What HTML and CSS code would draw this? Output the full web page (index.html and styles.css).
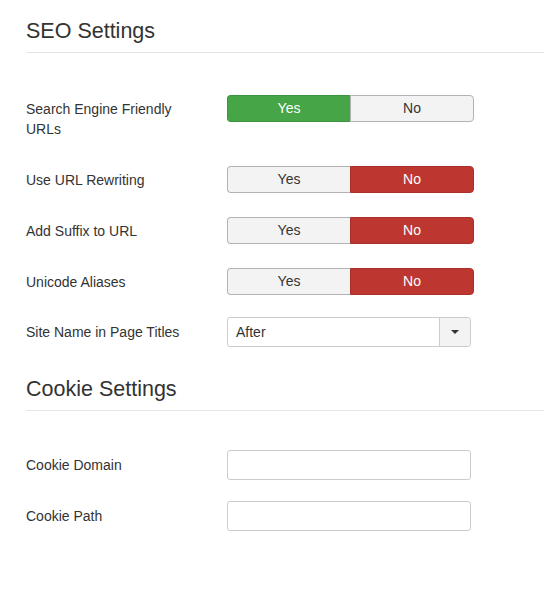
FILE: index.html
```html
<!DOCTYPE html>
<html lang="en">
<head>
    <meta charset="UTF-8">
    <meta name="viewport" content="width=device-width, initial-scale=1.0">
    <title>Global Configuration - Site</title>
    <link rel="stylesheet" href="styles.css">
</head>
<body>
    <div class="settings">

        <!-- SEO -->
        <fieldset class="fieldset">
            <div class="legend">SEO Settings</div>

            <div class="control-group">
                <label class="control-label">Search Engine Friendly URLs</label>
                <div class="controls">
                    <div class="btn-group">
                        <span class="btn active-yes">Yes</span>
                        <span class="btn">No</span>
                    </div>
                </div>
            </div>

            <div class="control-group">
                <label class="control-label">Use URL Rewriting</label>
                <div class="controls">
                    <div class="btn-group">
                        <span class="btn">Yes</span>
                        <span class="btn active-no">No</span>
                    </div>
                </div>
            </div>

            <div class="control-group">
                <label class="control-label">Add Suffix to URL</label>
                <div class="controls">
                    <div class="btn-group">
                        <span class="btn">Yes</span>
                        <span class="btn active-no">No</span>
                    </div>
                </div>
            </div>

            <div class="control-group tight">
                <label class="control-label">Unicode Aliases</label>
                <div class="controls">
                    <div class="btn-group">
                        <span class="btn">Yes</span>
                        <span class="btn active-no">No</span>
                    </div>
                </div>
            </div>

            <div class="control-group field-row">
                <label class="control-label">Site Name in Page Titles</label>
                <div class="controls">
                    <div class="select">
                        <span class="select-value">After</span>
                        <span class="select-arrow"><b class="caret"></b></span>
                    </div>
                </div>
            </div>
        </fieldset>

        <!-- Cookies -->
        <fieldset class="fieldset cookie">
            <div class="legend">Cookie Settings</div>

            <div class="control-group field-row">
                <label class="control-label">Cookie Domain</label>
                <div class="controls">
                    <input class="input" type="text">
                </div>
            </div>

            <div class="control-group field-row">
                <label class="control-label">Cookie Path</label>
                <div class="controls">
                    <input class="input" type="text">
                </div>
            </div>
        </fieldset>

    </div>
</body>
</html>
```

FILE: styles.css
```css
body {
    margin: 0;
    background-color: #ffffff;
    color: #333333;
    font-family: "Liberation Sans", Arial, sans-serif;
    font-size: 14px;
}

.settings {
    padding: 19px 0 0 26px;
}

.fieldset {
    border: none;
    margin: 0;
    padding: 0;
}

/* Section title with the thin rule under it */
.legend {
    font-size: 21.5px;
    line-height: 24px;
    padding-bottom: 9px;
    border-bottom: 1px solid #e5e5e5;
    margin-bottom: 42px;
}

.cookie {
    margin-top: 9px;
}

.cookie .legend {
    margin-bottom: 39px;
}

/* Label + control rows */
.control-group {
    display: flex;
    align-items: flex-start;
    margin-bottom: 24px;
}

.control-group.tight {
    margin-bottom: 22px;
}

.control-group.field-row {
    margin-bottom: 21px;
}

.control-label {
    flex: 0 0 160px;
    margin-right: 41px;
    padding: 4px 0 3px;
    line-height: 20px;
}

.field-row .control-label {
    padding-top: 5px;
}

.controls {
    flex: 0 0 auto;
}

/* Yes / No toggle */
.btn-group {
    display: flex;
    width: 247px;
}

.btn {
    flex: 1;
    box-sizing: border-box;
    height: 27px;
    line-height: 25px;
    text-align: center;
    background-color: #f3f3f3;
    border: 1px solid #b3b3b3;
    color: #333333;
}

.btn:first-child {
    border-radius: 4px 0 0 4px;
    border-right: none;
}

.btn:last-child {
    border-radius: 0 4px 4px 0;
}

.btn.active-yes {
    background-color: #46a546;
    border-color: #3f953f;
    color: #ffffff;
}

.btn.active-no {
    background-color: #bd362f;
    border-color: #a9302a;
    color: #ffffff;
}

/* Select box */
.select {
    display: flex;
    box-sizing: border-box;
    width: 244px;
    height: 30px;
    border: 1px solid #cccccc;
    border-radius: 3px;
    background-color: #ffffff;
}

.select-value {
    flex: 1;
    padding-left: 8px;
    line-height: 28px;
}

.select-arrow {
    display: flex;
    align-items: center;
    justify-content: center;
    width: 30px;
    border-left: 1px solid #cccccc;
    background-color: #f3f3f3;
    border-radius: 0 3px 3px 0;
}

.caret {
    width: 0;
    height: 0;
    border-top: 4px solid #333333;
    border-left: 4px solid transparent;
    border-right: 4px solid transparent;
}

/* Text inputs */
.input {
    display: block;
    box-sizing: border-box;
    width: 244px;
    height: 30px;
    margin: 0;
    border: 1px solid #cccccc;
    border-radius: 3px;
    background-color: #ffffff;
}
```
